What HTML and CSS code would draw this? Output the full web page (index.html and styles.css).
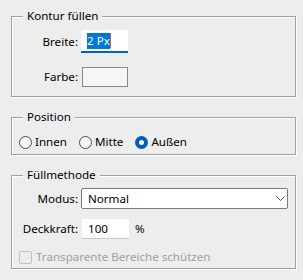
FILE: index.html
```html
<!DOCTYPE html>
<html>
<head>
  <title>Kontur</title>
  <link rel="stylesheet" href="styles.css">
</head>
<body>
  <fieldset class="group group-kontur">
    <legend>Kontur füllen</legend>
    <div class="row row-first">
      <label class="lbl">Breite:</label>
      <span class="field field-focus"><span class="selected">2 Px</span><span class="caret"></span></span>
    </div>
    <div class="row row-farbe">
      <label class="lbl">Farbe:</label>
      <span class="swatch"></span>
    </div>
  </fieldset>

  <fieldset class="group group-position">
    <legend>Position</legend>
    <div class="radios">
      <span class="radio"><span class="dot"></span>Innen</span>
      <span class="radio"><span class="dot"></span>Mitte</span>
      <span class="radio"><span class="dot checked"></span>Außen</span>
    </div>
  </fieldset>

  <fieldset class="group group-fill">
    <legend>Füllmethode</legend>
    <div class="row row-modus">
      <label class="lbl">Modus:</label>
      <span class="select">
        Normal
        <svg class="chevron" width="9" height="6" viewBox="0 0 9 6"><polyline points="0.5,0.5 4.5,4.5 8.5,0.5" fill="none" stroke="#555" stroke-width="1"/></svg>
      </span>
    </div>
    <div class="row row-deck">
      <label class="lbl">Deckkraft:</label>
      <span class="field">100</span>
      <span class="unit">%</span>
    </div>
    <div class="check disabled">
      <span class="box"></span>Transparente Bereiche schützen
    </div>
  </fieldset>
</body>
</html>
```
FILE: styles.css
```css
body {
  margin: 0;
  padding: 8px 7px 0 11px;
  background: #ededed;
  font-family: "Noto Sans", sans-serif;
  font-size: 11.6px;
  line-height: 16px;
  color: #000;
  }
.group {
  margin: 0 0 12px 0;
  padding: 0;
  border: 1px solid #a0a0a0;
  box-shadow: 1px 1px 0 #fff, inset 1px 1px 0 #fff;
  min-width: 0;
  }
.group legend {
  margin-left: 11px;
  padding: 0 4px;
  background: #ededed;
  }
.group-kontur {
  padding-bottom: 9px;
  }
.group-position {
  padding-bottom: 4px;
  }
.group-fill {
  padding-bottom: 3px;
  }
.row {
  display: flex;
  align-items: center;
  padding-right: 7px;
  }
.lbl {
  width: 66px;
  text-align: right;
  margin-right: 3px;
  flex-shrink: 0;
  }
.row-first {
  margin-top: 6px;
  }
.row-farbe {
  margin-top: 14px;
  }
.field {
  box-sizing: border-box;
  width: 47px;
  height: 20px;
  padding-left: 6px;
  background: #fff;
  border-bottom: 1px solid #c8c8c8;
  display: flex;
  align-items: center;
  }
.field-focus {
  height: 23px;
  border-bottom: 2px solid #0067c0;
  }
.selected {
  background: #0078d7;
  color: #fff;
  }
.caret {
  width: 1px;
  height: 15px;
  background: #c86b1e;
  }
.swatch {
  box-sizing: border-box;
  width: 46px;
  height: 20px;
  margin-left: 1px;
  border: 1px solid #8a8a8a;
  background: #f5f6f8;
  }
.radios {
  display: flex;
  align-items: center;
  height: 16px;
  margin-top: 9px;
  padding-left: 7px;
  }
.radio {
  display: flex;
  align-items: center;
  margin-right: 12px;
  }
.dot {
  box-sizing: border-box;
  width: 13px;
  height: 13px;
  margin-right: 3px;
  border: 1px solid #4a4a4a;
  border-radius: 50%;
  background: #f6f6f6;
  }
.dot.checked {
  border: 4px solid #0060b8;
  background: #fff;
  }
.row-modus {
  margin-top: 5px;
  }
.select {
  box-sizing: border-box;
  flex: 1;
  height: 21px;
  padding: 0 2px 0 6px;
  border: 1px solid #7a7a7a;
  border-radius: 2px;
  background: #fff;
  display: flex;
  align-items: center;
  justify-content: space-between;
  }
.row-deck {
  margin-top: 10px;
  }
.row-deck .field {
  margin-left: 1px;
  }
.unit {
  margin-left: 6px;
  }
.check {
  display: flex;
  align-items: center;
  height: 16px;
  margin-top: 10px;
  padding-left: 7px;
  }
.check .box {
  box-sizing: border-box;
  width: 13px;
  height: 13px;
  margin-right: 4px;
  border: 1px solid #c2c2c2;
  border-radius: 2px;
  }
.disabled {
  color: #a0a0a0;
  }
```
